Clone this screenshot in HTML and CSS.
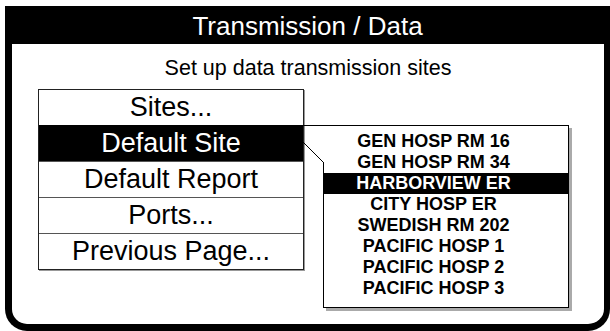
FILE: index.html
```html
<!DOCTYPE html>
<html lang="en">
<head>
  <meta charset="UTF-8">
  <title>Transmission / Data</title>
  <link rel="stylesheet" href="styles.css">
</head>
<body>
  <div class="frame">
    <header class="title">Transmission / Data</header>
    <p class="subtitle">Set up data transmission sites</p>

    <ul class="menu">
      <li>Sites...</li>
      <li class="active">Default Site</li>
      <li>Default Report</li>
      <li>Ports...</li>
      <li>Previous Page...</li>
    </ul>

    <div class="popup">
      <svg class="pointer" width="22" height="40" viewBox="0 0 22 40">
        <polyline points="0,0.5 21,0.5" fill="none" stroke="#000" stroke-width="1"/>
        <polyline points="0,16 21.5,37.5 21.5,40" fill="none" stroke="#000" stroke-width="1"/>
      </svg>
      <ul class="sites">
        <li>GEN HOSP RM 16</li>
        <li>GEN HOSP RM 34</li>
        <li class="active">HARBORVIEW ER</li>
        <li>CITY HOSP ER</li>
        <li>SWEDISH RM 202</li>
        <li>PACIFIC HOSP 1</li>
        <li>PACIFIC HOSP 2</li>
        <li>PACIFIC HOSP 3</li>
      </ul>
    </div>
  </div>
</body>
</html>
```

FILE: styles.css
```css
* {
  box-sizing: border-box;
  font-family: 'Liberation Sans', Arial, sans-serif;
}
body {
  margin: 0;
  background: white;
  color: #000;
}
.frame {
  position: relative;
  width: 605px;
  height: 325px;
  margin: 6px 0 0 5px;
  border: 7px solid #000;
  border-top: 0;
  border-right-width: 6px;
  border-radius: 0 0 22px 22px;
}
.title {
  margin: 0 -6px 0 -7px;
  height: 38px;
  background: #000;
  color: white;
  font-size: 26px;
  line-height: 41px;
  text-align: center;
  overflow: hidden;
}
.subtitle {
  margin: 11px 0 0;
  font-size: 21.5px;
  line-height: 26px;
  text-align: center;
}
.menu {
  list-style: none;
  margin: 8px 0 0 26px;
  padding: 0;
  width: 266px;
  border: 1px solid #222;
  box-shadow: 1px 1px 0 #999;
}
.menu li {
  height: 36px;
  font-size: 27px;
  line-height: 35px;
  text-align: center;
  border-top: 1px solid #555;
}
.menu li:first-child {
  height: 35px;
  border-top: 0;
}
.menu li.active {
  background: #000;
  color: white;
  border-top-color: #000;
}
.popup {
  position: absolute;
  left: 311px;
  top: 119px;
  width: 246px;
  height: 183px;
  border: 1px solid #000;
  border-left: 0;
  box-shadow: 3px 3px 0 #aaa;
}
.popup::before {
  content: "";
  position: absolute;
  left: 0;
  top: 36px;
  bottom: 0;
  border-left: 1px solid #000;
}
.pointer {
  position: absolute;
  left: -21px;
  top: -1px;
}
.sites {
  list-style: none;
  margin: 0;
  padding: 5px 0 0;
}
.sites li {
  height: 21px;
  padding-right: 24px;
  font-size: 18px;
  font-weight: bold;
  line-height: 21px;
  text-align: center;
}
.sites li.active {
  background: #000;
  color: white;
}
```
